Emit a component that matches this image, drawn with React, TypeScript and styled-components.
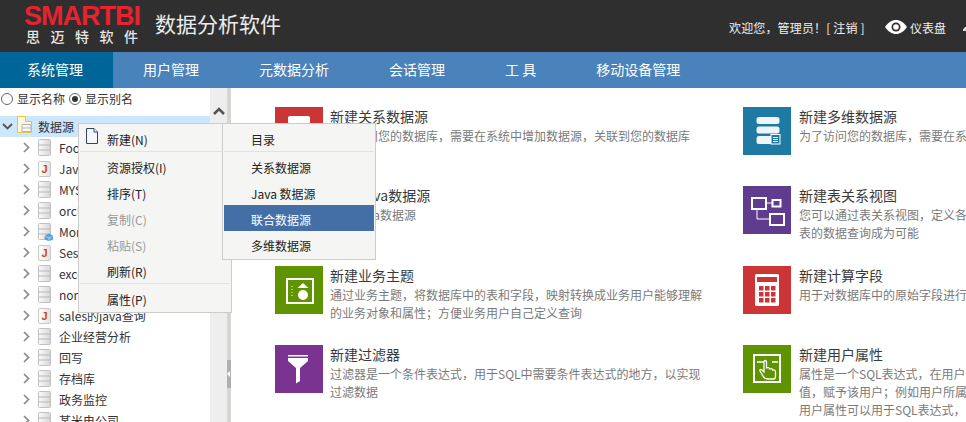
import React from "react";
import styled, { createGlobalStyle } from "styled-components";

const FONT = `"Noto Sans CJK SC", "Liberation Sans", sans-serif`;

const Global = createGlobalStyle`
  html, body { margin: 0; padding: 0; width: 100%; height: 100%; overflow: hidden; background: #fff; }
  body { font-family: ${FONT}; font-size: 12px; }
  * { box-sizing: border-box; }
`;

const Page = styled.div`
  position: relative;
  width: 966px;
  height: 422px;
  overflow: hidden;
  display: flex;
  flex-direction: column;
`;

const Header = styled.header`
  height: 52px;
  flex: none;
  background: #2f2f2f;
  display: flex;
  align-items: center;
  padding-left: 24px;
  white-space: nowrap;
  overflow: hidden;
`;
const Logo = styled.div`
  width: 131px;
  display: flex;
  flex-direction: column;
  margin-top: -2px;
`;
const LogoMark = styled.div`
  font-family: "Liberation Sans", sans-serif;
  font-weight: 700;
  font-size: 27px;
  line-height: 22px;
  letter-spacing: -1px;
  color: #e8222e;
`;
const LogoSub = styled.div`
  font-size: 14px;
  line-height: 17px;
  font-weight: 500;
  letter-spacing: 10.5px;
  color: #e6e6e6;
  margin: 1px 0 0 2px;
`;
const AppTitle = styled.div`
  font-size: 21px;
  line-height: 30px;
  color: #ececec;
  margin-top: -6px;
`;
const UserArea = styled.div`
  margin-left: auto;
  width: 237px;
  flex: none;
  overflow: hidden;
  display: flex;
  align-items: center;
  font-size: 12px;
  color: #f0f0f0;
  margin-top: 2px;
`;
const Welcome = styled.span`
  flex: none;
  width: 156px;
  letter-spacing: 0.15px;
`;
const Dash = styled.span`
  flex: none;
  display: flex;
  align-items: center;
  gap: 3px;
  font-size: 12px;
  width: 78px;
`;
const MoreGlyph = styled.svg`
  flex: none;
  width: 12px;
  height: 12px;
`;

const Nav = styled.nav`
  height: 36px;
  flex: none;
  background: #4a82bc;
  display: flex;
`;
const Tab = styled.div<{ $active?: boolean }>`
  height: 36px;
  line-height: 35px;
  font-size: 14px;
  color: #fff;
  padding: 0 30px;
  white-space: pre;
  background: ${(p) => (p.$active ? "#006699" : "transparent")};
  padding-left: ${(p) => (p.$active ? "27px" : "30px")};
`;

const Main = styled.div`
  flex: 1;
  min-height: 0;
  display: flex;
`;
const Sidebar = styled.aside`
  width: 210px;
  flex: none;
  display: flex;
  flex-direction: column;
  overflow: hidden;
`;
const RadioRow = styled.div`
  height: 28px;
  flex: none;
  display: flex;
  align-items: flex-start;
  padding: 2px 0 0 1px;
  color: #333;
  line-height: 18px;
`;
const Radio = styled.span<{ $on?: boolean }>`
  width: 12px;
  height: 12px;
  margin: 3px 4px 0 0;
  border-radius: 50%;
  border: 1px solid #666;
  background: #fff;
  display: flex;
  align-items: center;
  justify-content: center;
  &::after {
    content: "";
    width: 6px;
    height: 6px;
    border-radius: 50%;
    background: ${(p) => (p.$on ? "#333" : "transparent")};
  }
`;
const RadioLabel = styled.span`
  margin-right: 4px;
`;
const TreeRow = styled.div<{ $root?: boolean }>`
  height: 21px;
  flex: none;
  display: flex;
  align-items: center;
  color: #333;
  font-size: 12px;
  line-height: 19px;
  white-space: nowrap;
  padding-left: ${(p) => (p.$root ? "2px" : "22px")};
  background: ${(p) => (p.$root ? "#cce6fb" : "transparent")};
`;
const Caret = styled.svg`
  flex: none;
  width: 9px;
  height: 11px;
  margin-right: 7px;
`;
const RootCaret = styled.svg`
  flex: none;
  width: 11px;
  height: 9px;
  margin-right: 4px;
`;
const NodeIcon = styled.svg`
  flex: none;
  width: 15px;
  height: 18px;
  margin-right: 6px;
`;
const FolderIcon = styled.svg`
  flex: none;
  width: 15px;
  height: 17px;
  margin: -4px 6px 0 0;
`;
const JavaIcon = styled.span`
  flex: none;
  width: 13px;
  height: 16px;
  margin: 0 8px 0 0;
  border: 1px solid #c8c8c8;
  border-radius: 2px;
  background: linear-gradient(90deg, #fff, #e2e2e2);
  color: #cc4a12;
  font: 700 11px/14px "Liberation Sans", sans-serif;
  text-align: center;
`;
const ScrollBar = styled.div`
  width: 17px;
  flex: none;
  background: #eeeeee;
  padding: 19px 0 0 3px;
`;
const ScrollUp = styled.svg`
  display: block;
  width: 12px;
  height: 8px;
`;
const Splitter = styled.div`
  width: 4px;
  flex: none;
  background: #d8d6d2;
  padding-top: 272px;
`;
const SplitHandle = styled.div`
  height: 28px;
  background: #b0b0b0;
  display: flex;
  align-items: center;
  &::after {
    content: "";
    border: 3px solid transparent;
    border-left-width: 0;
    border-right-color: #fff;
  }
`;

const Content = styled.main`
  flex: 1;
  min-width: 0;
  overflow: hidden;
  display: grid;
  grid-template-columns: 468px 468px;
  grid-auto-rows: 79.3px;
  padding: 19px 0 0 44px;
`;
const Card = styled.section<{ $gap: number }>`
  display: flex;
  gap: ${(p) => p.$gap}px;
  white-space: nowrap;
`;
const Tile = styled.div<{ $bg: string }>`
  width: 48px;
  height: 48px;
  flex: none;
  background: ${(p) => p.$bg};
`;
const TileIcon = styled.svg`
  display: block;
  width: 48px;
  height: 48px;
`;
const CardBody = styled.div`
  display: flex;
  flex-direction: column;
  margin-top: -1px;
`;
const CardTitle = styled.div`
  font-size: 14px;
  line-height: 20px;
  color: #3a3a3a;
`;
const CardDesc = styled.div`
  font-size: 12px;
  line-height: 18px;
  color: #7a7a7a;
  margin-top: 1px;
`;

const Menu = styled.div<{ $left: number; $height: number }>`
  position: absolute;
  top: 123px;
  left: ${(p) => p.$left}px;
  width: 154px;
  height: ${(p) => p.$height}px;
  overflow: hidden;
  padding: 1px;
  background: #f5f5f3;
  border: 1px solid #cccccc;
  font-size: 12px;
`;
const MenuItem = styled.div<{ $disabled?: boolean; $active?: boolean }>`
  height: 26px;
  display: flex;
  align-items: flex-start;
  padding-top: 4px;
  line-height: 21px;
  white-space: nowrap;
  color: ${(p) => (p.$active ? "#fff" : p.$disabled ? "#999" : "#222")};
  background: ${(p) => (p.$active ? "#446ea6" : "transparent")};
`;
const Gutter = styled.span`
  width: 27px;
  flex: none;
  display: flex;
  padding: 0 0 0 6px;
`;
const PageIcon = styled.svg`
  width: 12px;
  height: 16px;
  margin-top: -1px;
`;
const MenuSep = styled.div`
  height: 1px;
  margin-bottom: 1px;
  background: #e2e2e0;
`;

const Db = ({ badge }: { badge?: boolean }) => (
  <NodeIcon viewBox="0 0 15 18">
    <defs>
      <linearGradient id="dbg" x1="0" x2="1" y1="0" y2="0">
        <stop offset="0" stopColor="#fbfbfb" />
        <stop offset="1" stopColor="#d6d6d6" />
      </linearGradient>
    </defs>
    <rect x="0.5" y="0.5" width="12" height="16" rx="1" fill="url(#dbg)" stroke="#c0c0c0" />
    <path d="M1 6h11M1 11h11" stroke="#b8b8b8" />
    {badge && (
      <g>
        <path d="M7 13l4-2 4 2v3l-4 2-4-2z" fill="#5aa5e0" stroke="#3a86c8" strokeWidth="0.6" />
        <path d="M7 13l4 2 4-2M11 15v3" fill="none" stroke="#d5eafa" strokeWidth="0.6" />
      </g>
    )}
  </NodeIcon>
);

const Node = ({ name, java, badge }: { name: string; java?: boolean; badge?: boolean }) => (
  <TreeRow>
    <Caret viewBox="0 0 9 11">
      <path d="M2 1l4.500 4.500L2 10" fill="none" stroke="#8a8a8a" strokeWidth="1.700" />
    </Caret>
    {java ? <JavaIcon>J</JavaIcon> : <Db badge={badge} />}
    {name}
  </TreeRow>
);

const IconDb = () => (
  <TileIcon viewBox="0 0 48 48">
    <rect x="13" y="9" width="22" height="8" rx="2" fill="#fff" />
  </TileIcon>
);
const IconBlank = () => <TileIcon viewBox="0 0 48 48" />;
const IconCube = () => (
  <TileIcon viewBox="0 0 48 48">
    <rect x="13.500" y="10" width="23" height="7" rx="2.500" fill="#fff" opacity="0.92" />
    <rect x="13.500" y="19.500" width="23" height="7" rx="2.500" fill="#fff" opacity="0.92" />
    <rect x="13.500" y="29" width="23" height="8" rx="2.500" fill="#fff" opacity="0.92" />
    <rect x="28" y="27.500" width="9" height="9.500" fill="#1f7aa3" stroke="#fff" />
    <path d="M30 30.500h5M30 32.500h5M30 34.500h5" stroke="#fff" />
  </TileIcon>
);
const IconRel = () => (
  <TileIcon viewBox="0 0 48 48">
    <g fill="none" stroke="#fff" strokeWidth="2">
      <rect x="9" y="12" width="14" height="11" />
      <rect x="29.500" y="14" width="8" height="6.500" />
      <rect x="27" y="28" width="14" height="11" />
    </g>
    <path d="M23 17h7M14 23v10h13" fill="none" stroke="#fff" />
  </TileIcon>
);
const IconTopic = () => (
  <TileIcon viewBox="0 0 48 48">
    <rect x="12" y="13" width="26" height="24" fill="none" stroke="#fff" strokeWidth="2" />
    <path d="M28 17l5.500 5h-11z" fill="#fff" />
    <circle cx="28" cy="29" r="5" fill="#fff" />
    <path d="M17 20v10" stroke="#fff" strokeDasharray="1 2" />
  </TileIcon>
);
const IconCalc = () => (
  <TileIcon viewBox="0 0 48 48">
    <rect x="12" y="8" width="24" height="32" rx="1.500" fill="#fff" />
    <rect x="14" y="11" width="20" height="5" fill="#cc3535" />
    {[20, 26, 32].map((y) =>
      [16, 22, 28].map((x) => <rect key={`${x}-${y}`} x={x} y={y} width="4.500" height="4.500" fill="#cc3535" />)
    )}
  </TileIcon>
);
const IconFunnel = () => (
  <TileIcon viewBox="0 0 48 48">
    <rect x="13" y="10" width="20" height="1.500" fill="#fff" />
    <path d="M13 13h20v3l-8 7v13l-4 2.500V23l-8-7z" fill="#fff" />
  </TileIcon>
);
const IconHand = () => (
  <TileIcon viewBox="0 0 48 48">
    <rect x="11" y="10" width="26" height="27" fill="none" stroke="#fff" strokeWidth="2" />
    <path d="M14 17h7M29 17h6" stroke="#fff" strokeWidth="1.500" />
    <path
      d="M25 34c-3 0-4-1-5-3l-3-5c-.6-1.200 1-2 2-1l2 2v-10c0-2 2.500-2 2.500 0v6c2-1 3 0 3 1 2-1 3 0 3 1 2-.5 3 .5 3 2v4c0 2-1 3-2 3z"
      fill="none"
      stroke="#fff"
      strokeWidth="1.300"
    />
  </TileIcon>
);

const cards = [
  { bg: "#cc3535", Icon: IconDb, title: "新建关系数据源", lines: ["为了访问您的数据库，需要在系统中增加数据源，关联到您的数据库"] },
  { bg: "#1f7aa3", Icon: IconCube, title: "新建多维数据源", lines: ["为了访问您的数据库，需要在系统中增加数据源"] },
  { bg: "#1f7aa3", Icon: IconBlank, title: "新建Java数据源", lines: ["通过Java数据源"] },
  { bg: "#5f3c8e", Icon: IconRel, title: "新建表关系视图", lines: ["您可以通过表关系视图，定义各个表之间的关系", "表的数据查询成为可能"] },
  { bg: "#5f9300", Icon: IconTopic, title: "新建业务主题", lines: ["通过业务主题，将数据库中的表和字段，映射转换成业务用户能够理解", "的业务对象和属性；方便业务用户自己定义查询"] },
  { bg: "#cc3535", Icon: IconCalc, title: "新建计算字段", lines: ["用于对数据库中的原始字段进行计算"] },
  { bg: "#7a3391", Icon: IconFunnel, title: "新建过滤器", lines: ["过滤器是一个条件表达式，用于SQL中需要条件表达式的地方，以实现", "过滤数据"] },
  { bg: "#5f9300", Icon: IconHand, title: "新建用户属性", lines: ["属性是一个SQL表达式，在用户登录时计算", "值，赋予该用户；例如用户所属部门", "用户属性可以用于SQL表达式，"] },
];

const nodes: { name: string; java?: boolean; badge?: boolean }[] = [
  { name: "Foodmart" },
  { name: "Java数据源", java: true },
  { name: "MYSQL" },
  { name: "orcl" },
  { name: "Mondrian", badge: true },
  { name: "Session", java: true },
  { name: "excel" },
  { name: "northwind" },
  { name: "sales的java查询", java: true },
  { name: "企业经营分析" },
  { name: "回写" },
  { name: "存档库" },
  { name: "政务监控" },
  { name: "某米电公司" },
];

export default function App() {
  return (
    <Page>
      <Global />
      <Header>
        <Logo>
          <LogoMark>SMARTBI</LogoMark>
          <LogoSub>思迈特软件</LogoSub>
        </Logo>
        <AppTitle>数据分析软件</AppTitle>
        <UserArea>
          <Welcome>欢迎您，管理员！[ 注销 ]</Welcome>
          <Dash>
            <svg width="22" height="14" viewBox="0 0 22 14">
              <path d="M0 7c3-4.500 7-7 11-7s8 2.500 11 7c-3 4.500-7 7-11 7S3 11.500 0 7z" fill="#fff" />
              <circle cx="11" cy="7" r="4.500" fill="#2f2f2f" />
              <circle cx="11" cy="7" r="2.800" fill="#fff" />
            </svg>
            仪表盘
          </Dash>
          <MoreGlyph viewBox="0 0 12 12">
            <path d="M0 8.500l2-2.500h2v4H0z" fill="#ddd" />
          </MoreGlyph>
        </UserArea>
      </Header>
      <Nav>
        <Tab $active>系统管理</Tab>
        <Tab>用户管理</Tab>
        <Tab>元数据分析</Tab>
        <Tab>会话管理</Tab>
        <Tab>工 具</Tab>
        <Tab>移动设备管理</Tab>
      </Nav>
      <Main>
        <Sidebar>
          <RadioRow>
            <Radio />
            <RadioLabel>显示名称</RadioLabel>
            <Radio $on />
            <RadioLabel>显示别名</RadioLabel>
          </RadioRow>
          <TreeRow $root>
            <RootCaret viewBox="0 0 11 9">
              <path d="M1 2l4.500 4.500L10 2" fill="none" stroke="#555" strokeWidth="1.800" />
            </RootCaret>
            <FolderIcon viewBox="0 0 15 17">
              <path d="M.5.5h8v5h6v11H.5z" fill="#fff8d8" stroke="#eac24a" />
              <path d="M5 8.500h9v7H5zM5 12h9" fill="#f6f6f6" stroke="#b5b5b5" />
            </FolderIcon>
            数据源
          </TreeRow>
          {nodes.map((n) => (
            <Node key={n.name} {...n} />
          ))}
        </Sidebar>
        <ScrollBar>
          <ScrollUp viewBox="0 0 12 8">
            <path d="M1 7l5-5 5 5" fill="none" stroke="#555" strokeWidth="2.600" />
          </ScrollUp>
        </ScrollBar>
        <Splitter>
          <SplitHandle />
        </Splitter>
        <Content>
          {cards.map(({ bg, Icon, title, lines }, i) => (
            <Card key={title} $gap={i % 2 ? 8 : 7}>
              <Tile $bg={bg}>
                <Icon />
              </Tile>
              <CardBody>
                <CardTitle>{title}</CardTitle>
                <CardDesc>
                  {lines.map((l) => (
                    <div key={l}>{l}</div>
                  ))}
                </CardDesc>
              </CardBody>
            </Card>
          ))}
        </Content>
      </Main>
      <Menu $left={78} $height={190}>
        <MenuItem>
          <Gutter>
            <PageIcon viewBox="0 0 12 16">
              <path d="M.5.5h7.500l3.500 3.500v11.500H.5z" fill="#f4f7fc" stroke="#30456e" />
              <path d="M8 .5v3.500h3.500" fill="#fff" stroke="#30456e" />
            </PageIcon>
          </Gutter>
          新建(N)
        </MenuItem>
        <MenuSep />
        <MenuItem><Gutter />资源授权(I)</MenuItem>
        <MenuItem><Gutter />排序(T)</MenuItem>
        <MenuItem $disabled><Gutter />复制(C)</MenuItem>
        <MenuItem $disabled><Gutter />粘贴(S)</MenuItem>
        <MenuItem><Gutter />刷新(R)</MenuItem>
        <MenuSep />
        <MenuItem><Gutter />属性(P)</MenuItem>
      </Menu>
      <Menu $left={222} $height={137}>
        <MenuItem><Gutter />目录</MenuItem>
        <MenuSep />
        <MenuItem><Gutter />关系数据源</MenuItem>
        <MenuItem><Gutter />Java 数据源</MenuItem>
        <MenuItem $active><Gutter />联合数据源</MenuItem>
        <MenuItem><Gutter />多维数据源</MenuItem>
      </Menu>
    </Page>
  );
}
